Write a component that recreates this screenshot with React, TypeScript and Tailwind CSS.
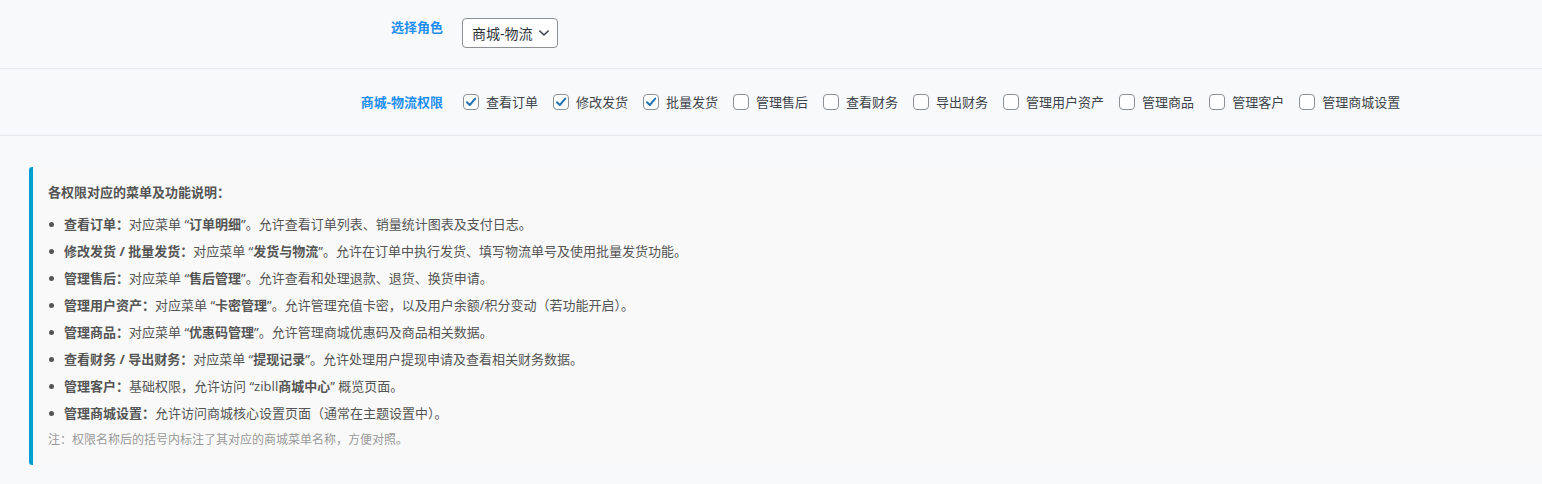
import React from "react";

const perms: { label: string; checked: boolean }[] = [
  { label: "查看订单", checked: true },
  { label: "修改发货", checked: true },
  { label: "批量发货", checked: true },
  { label: "管理售后", checked: false },
  { label: "查看财务", checked: false },
  { label: "导出财务", checked: false },
  { label: "管理用户资产", checked: false },
  { label: "管理商品", checked: false },
  { label: "管理客户", checked: false },
  { label: "管理商城设置", checked: false },
];

function Checkbox({ checked }: { checked: boolean }) {
  return (
    <span className="flex h-[16px] w-[16px] shrink-0 items-center justify-center rounded-[4px] border border-[#8c8f94] bg-white">
      {checked && (
        <svg width="12" height="12" viewBox="0 0 12 12" fill="none">
          <path d="M2 6.3 L4.8 9 L10.2 2.6" stroke="#2271b1" strokeWidth="2" strokeLinecap="round" strokeLinejoin="round" />
        </svg>
      )}
    </span>
  );
}

function Item({ title, children }: { title: string; children: React.ReactNode }) {
  return (
    <li className="flex items-start leading-[20px]">
      <span className="mt-[8px] ml-[1px] mr-[10px] h-[5px] w-[5px] shrink-0 rounded-full bg-[#555]" />
      <span>
        <b className="font-bold text-[#555]">{title}</b>
        {children}
      </span>
    </li>
  );
}

export default function App() {
  return (
    <div
      className="min-h-[484px] w-full bg-[#f8f9fb] text-[13px] text-[#3c434a]"
      style={{ fontFamily: '"Noto Sans", "Noto Sans CJK SC", sans-serif' }}
    >
      <div className="flex h-[69px] items-start border-b border-[#e6e8eb]">
        <div className="w-[443px] pt-[17px] text-right font-bold leading-[20px] text-[#1e8ff0]">选择角色</div>
        <div className="ml-[19px] mt-[18px]">
          <div className="flex h-[30px] w-[96px] items-center justify-between rounded-[4px] border border-[#8c8f94] bg-white pl-[9px] pr-[7px] text-[14px] text-[#2c3338]">
            <span>商城-物流</span>
            <svg width="12" height="12" viewBox="0 0 12 12" fill="none">
              <path d="M1.8 4 L6 8 L10.2 4" stroke="#3c434a" strokeWidth="1.6" strokeLinecap="round" strokeLinejoin="round" />
            </svg>
          </div>
        </div>
      </div>

      <div className="flex h-[67px] items-center border-b border-[#e6e8eb]">
        <div className="w-[443px] text-right font-bold leading-[20px] text-[#1e8ff0]">商城-物流权限</div>
        <div className="ml-[20px] flex items-center gap-[15px]">
          {perms.map((p) => (
            <label key={p.label} className="flex items-center gap-[7px] leading-[20px] text-[#3c434a]">
              <Checkbox checked={p.checked} />
              <span>{p.label}</span>
            </label>
          ))}
        </div>
      </div>

      <div className="ml-[29px] mt-[31px] rounded-l-[3px] border-l-4 border-[#00a0d2] bg-[#f9f9f9] pb-[15px] pl-[15px] pt-[15px] text-[#555]">
        <div className="font-bold leading-[20px] text-[#555]">各权限对应的菜单及功能说明：</div>
        <ul className="mt-[12px] flex flex-col gap-[7px]">
          <Item title="查看订单：">
            对应菜单 “<b>订单明细</b>”。允许查看订单列表、销量统计图表及支付日志。
          </Item>
          <Item title="修改发货 / 批量发货：">
            对应菜单 “<b>发货与物流</b>”。允许在订单中执行发货、填写物流单号及使用批量发货功能。
          </Item>
          <Item title="管理售后：">
            对应菜单 “<b>售后管理</b>”。允许查看和处理退款、退货、换货申请。
          </Item>
          <Item title="管理用户资产：">
            对应菜单 “<b>卡密管理</b>”。允许管理充值卡密，以及用户余额/积分变动（若功能开启）。
          </Item>
          <Item title="管理商品：">
            对应菜单 “<b>优惠码管理</b>”。允许管理商城优惠码及商品相关数据。
          </Item>
          <Item title="查看财务 / 导出财务：">
            对应菜单 “<b>提现记录</b>”。允许处理用户提现申请及查看相关财务数据。
          </Item>
          <Item title="管理客户：">
            基础权限，允许访问 “zibll<b>商城中心</b>” 概览页面。
          </Item>
          <Item title="管理商城设置：">允许访问商城核心设置页面（通常在主题设置中）。</Item>
        </ul>
        <div className="mt-[7px] text-[12px] leading-[20px] text-[#999]">注：权限名称后的括号内标注了其对应的商城菜单名称，方便对照。</div>
      </div>
    </div>
  );
}
